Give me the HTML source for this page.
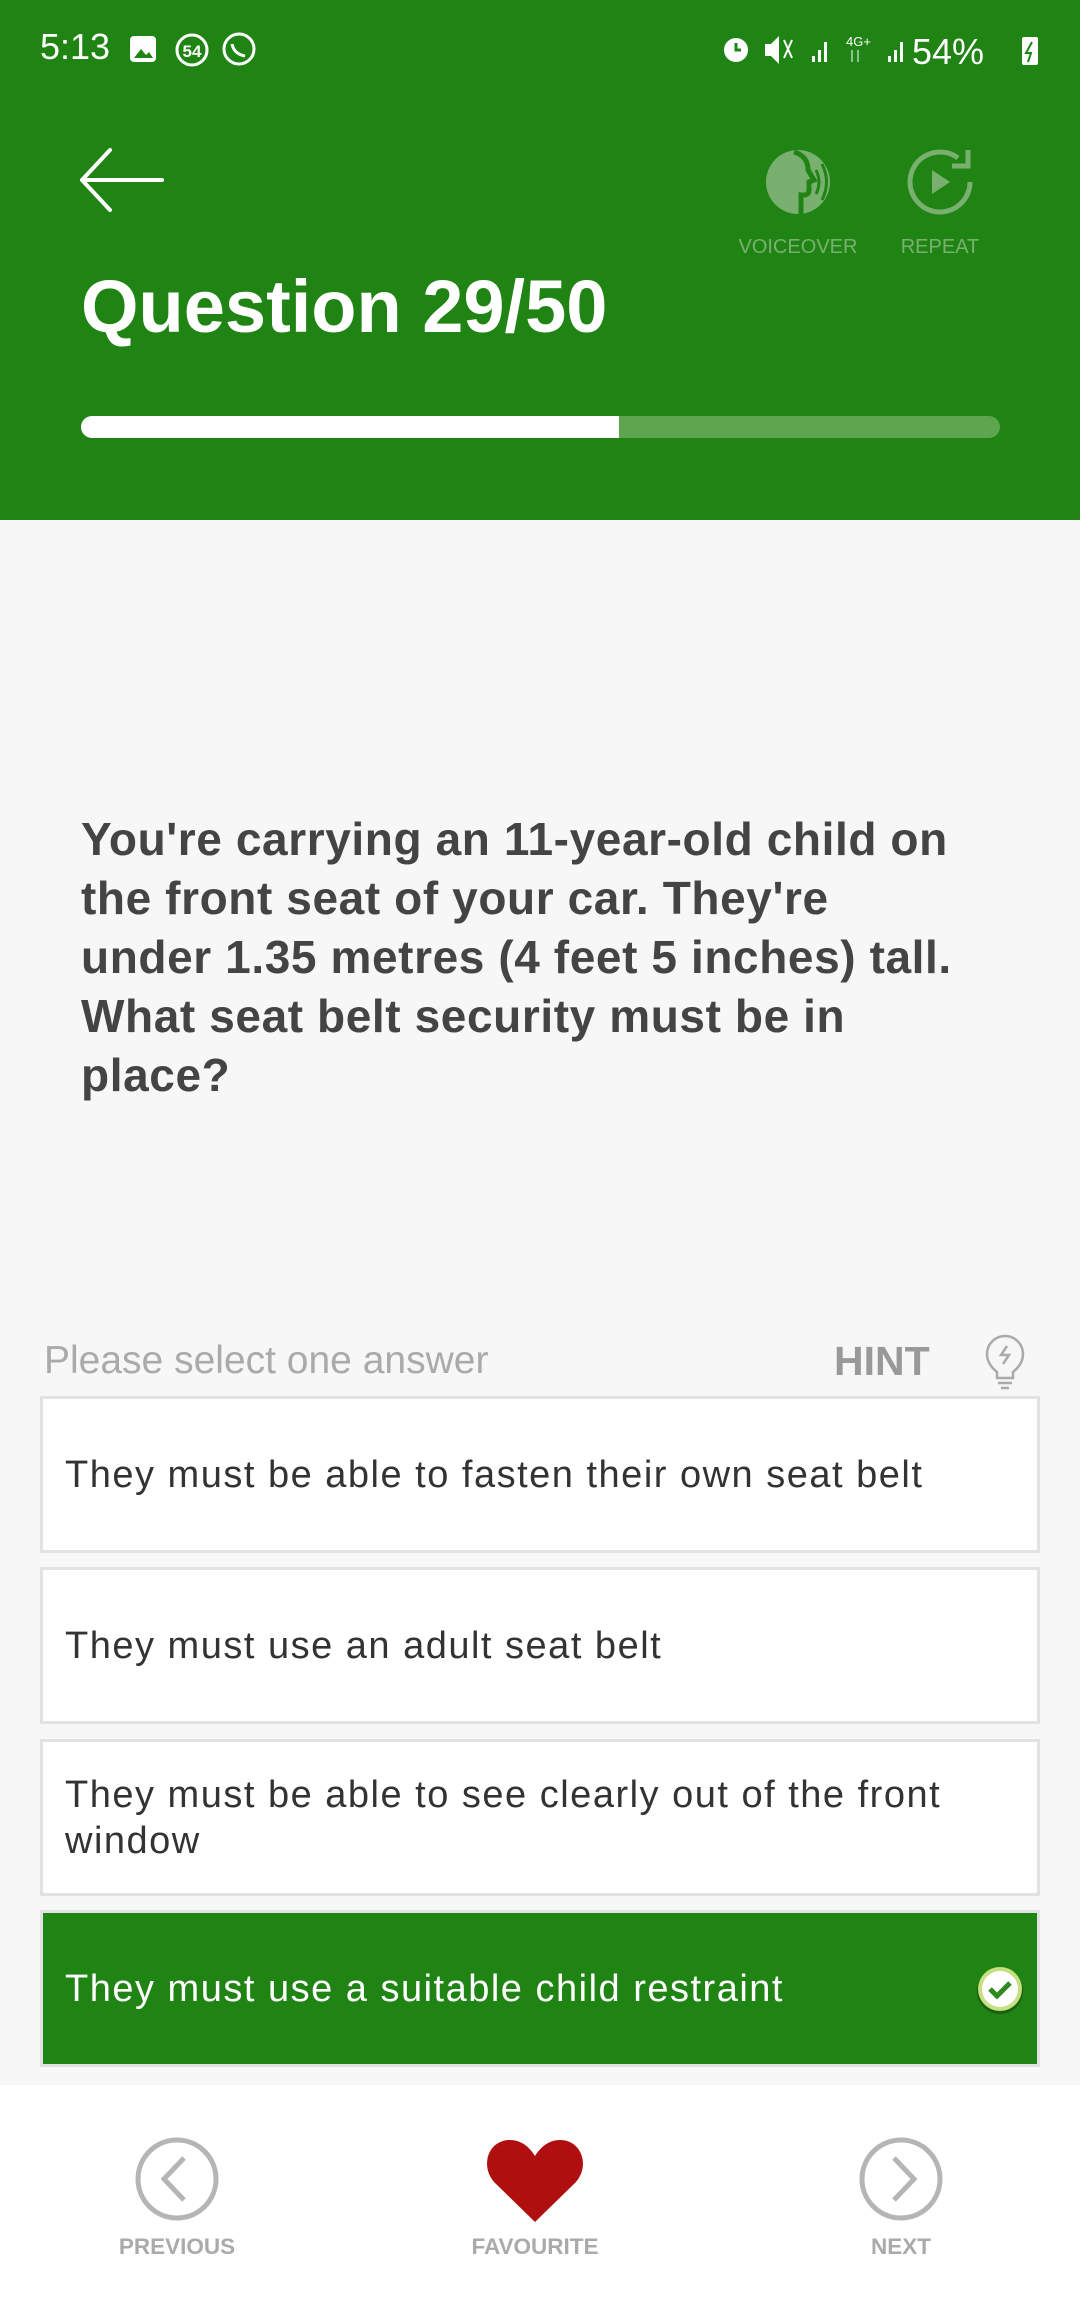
<!DOCTYPE html>
<html><head><meta charset="utf-8"><style>
*{margin:0;padding:0;box-sizing:border-box}
body{width:1080px;height:2316px;background:#f7f7f7;font-family:"Liberation Sans",sans-serif;position:relative;overflow:hidden}
.hdr{position:absolute;left:0;top:0;width:1080px;height:520px;background:#1f8413}
.abs{position:absolute}
.q{left:81px;top:810px;font-size:46px;font-weight:bold;color:#444;line-height:59px;letter-spacing:0.6px;white-space:nowrap}
.box{position:absolute;left:40px;width:1000px;height:157px;background:#fff;border:3px solid #e2e2e2;padding-left:22px;display:flex;align-items:center;font-size:38px;letter-spacing:1.5px;color:#333;line-height:46px}
.lbl{position:absolute;font-size:22.5px;font-weight:bold;color:#aaa;transform:translateX(-50%);top:2234px}
</style></head><body>
<div class="hdr"></div>
<div class="abs" style="left:40px;top:26px;font-size:36px;color:#fff">5:13</div>
<svg class="abs" style="left:128px;top:32px" width="134" height="36" viewBox="0 0 134 36">
<rect x="2" y="4" width="26" height="26" rx="4" fill="#fff"/><path d="M6 26 L13 17 L18 23 L21 20 L25 26Z" fill="#1f8413"/>
<circle cx="64" cy="18" r="15" fill="none" stroke="#fff" stroke-width="3"/><text x="64" y="25" font-size="17" fill="#fff" text-anchor="middle" font-family="Liberation Sans" font-weight="bold">54</text>
<circle cx="111" cy="17" r="15" fill="none" stroke="#fff" stroke-width="3"/><path d="M104 12 q2 10 13 12" stroke="#fff" stroke-width="3" fill="none"/></svg>
<svg class="abs" style="left:718px;top:30px" width="330" height="40" viewBox="0 0 330 40">
<circle cx="18" cy="20" r="12" fill="#fff"/><path d="M18 13 v7 h5" stroke="#1f8413" stroke-width="3" fill="none"/>
<path d="M47 14 h6 l8 -8 v28 l-8 -8 h-6z" fill="#fff"/><path d="M66 10 l8 18 M74 10 l-8 18" stroke="#fff" stroke-width="2"/>
<rect x="94" y="26" width="3" height="6" fill="#fff"/><rect x="100" y="20" width="3" height="12" fill="#fff"/><rect x="106" y="12" width="3" height="20" fill="#fff"/>
<text x="128" y="16" font-size="13" fill="#fff" font-family="Liberation Sans">4G+</text><path d="M134 20v12M140 20v12" stroke="#8fc08a" stroke-width="2"/>
<rect x="170" y="26" width="3" height="6" fill="#fff"/><rect x="176" y="20" width="3" height="12" fill="#fff"/><rect x="182" y="12" width="3" height="20" fill="#fff"/>
<text x="194" y="34" font-size="36" fill="#fff" font-family="Liberation Sans">54%</text>
<rect x="304" y="7" width="16" height="28" rx="2" fill="#fff"/><path d="M314 12 l-6 11 h5 l-3 9" stroke="#1f8413" stroke-width="2" fill="none"/></svg>
<svg class="abs" style="left:78px;top:145px" width="90" height="70" viewBox="0 0 90 70"><path d="M4 35 H84 M4 35 L32 5 M4 35 L32 65" stroke="#fff" stroke-width="4" fill="none" stroke-linecap="round"/></svg>
<svg class="abs" style="left:764px;top:148px" width="70" height="70" viewBox="0 0 70 70"><circle cx="34" cy="34" r="32" fill="#79b06f"/><path d="M30 4 q14 4 14 18 l6 10 -5 2 v8 q0 6 -8 5 v20" stroke="#1f8413" stroke-width="5" fill="none"/><path d="M52 22 q6 12 0 24 M58 16 q9 18 0 36" stroke="#1f8413" stroke-width="3" fill="none"/></svg>
<svg class="abs" style="left:904px;top:146px" width="72" height="72" viewBox="0 0 72 72"><path d="M54 12 A30 30 0 1 0 66 36" stroke="#79b06f" stroke-width="5" fill="none"/><path d="M64 4 V20 H48" stroke="#79b06f" stroke-width="5" fill="none"/><path d="M28 24 L46 36 L28 48Z" fill="#79b06f"/></svg>
<div class="abs" style="left:798px;top:236px;transform:translateX(-50%);font-size:20px;color:#79b06f">VOICEOVER</div>
<div class="abs" style="left:940px;top:236px;transform:translateX(-50%);font-size:20px;color:#79b06f">REPEAT</div>
<div class="abs" style="left:81px;top:264px;font-size:74px;font-weight:bold;color:#fff">Question 29/50</div>
<div class="abs" style="left:81px;top:416px;width:919px;height:22px;border-radius:11px;background:#5ea550;overflow:hidden"><div style="width:538px;height:22px;background:#fff"></div></div>
<div class="abs q">You're carrying an 11-year-old child on<br>the front seat of your car. They're<br>under 1.35 metres (4 feet 5 inches) tall.<br>What seat belt security must be in<br>place?</div>
<div class="abs" style="left:44px;top:1339px;font-size:39px;color:#aaa">Please select one answer</div>
<div class="abs" style="left:834px;top:1338px;font-size:41px;font-weight:bold;color:#999">HINT</div>
<svg class="abs" style="left:985px;top:1334px" width="40" height="56" viewBox="0 0 40 56"><path d="M12 38 q-10 -8 -10 -18 a18 18 0 0 1 36 0 q0 10 -10 18 v6 h-16z M12 44 h16 M13 49 h14 M16 54 h8 M22 12 l-6 9 h8 l-6 9" stroke="#aaa" stroke-width="2.5" fill="none"/></svg>
<div class="box" style="top:1396px">They must be able to fasten their own seat belt</div>
<div class="box" style="top:1567px">They must use an adult seat belt</div>
<div class="box" style="top:1739px">They must be able to see clearly out of the front<br>window</div>
<div class="box" style="top:1910px;background:#1f8413;color:#fff;border-color:#e2e2e2">They must use a suitable child restraint</div>
<svg class="abs" style="left:974px;top:1964px" width="52" height="52" viewBox="0 0 52 52"><circle cx="26" cy="27" r="23" fill="#1a5e10"/><circle cx="26" cy="25" r="22" fill="#c6e080"/><circle cx="26" cy="25" r="18" fill="#fff"/><path d="M16 25 l7 7 l13 -13" stroke="#2d8a1f" stroke-width="5" fill="none"/></svg>
<div class="abs" style="left:0;top:2085px;width:1080px;height:231px;background:#fff"></div>
<svg class="abs" style="left:134px;top:2136px" width="86" height="86" viewBox="0 0 86 86"><circle cx="43" cy="43" r="39" stroke="#b5b5b5" stroke-width="5" fill="none"/><path d="M50 22 L30 43 L50 64" stroke="#b5b5b5" stroke-width="5" fill="none"/></svg>
<svg class="abs" style="left:486px;top:2136px" width="98" height="88" viewBox="0 0 98 88"><path d="M49 86 L8 46 C-6 30 2 4 24 4 C36 4 44 12 49 20 C54 12 62 4 74 4 C96 4 104 30 90 46Z" fill="#b00f10"/></svg>
<svg class="abs" style="left:858px;top:2136px" width="86" height="86" viewBox="0 0 86 86"><circle cx="43" cy="43" r="39" stroke="#b5b5b5" stroke-width="5" fill="none"/><path d="M36 22 L56 43 L36 64" stroke="#b5b5b5" stroke-width="5" fill="none"/></svg>
<div class="lbl" style="left:177px">PREVIOUS</div>
<div class="lbl" style="left:535px">FAVOURITE</div>
<div class="lbl" style="left:901px">NEXT</div>
</body></html>
